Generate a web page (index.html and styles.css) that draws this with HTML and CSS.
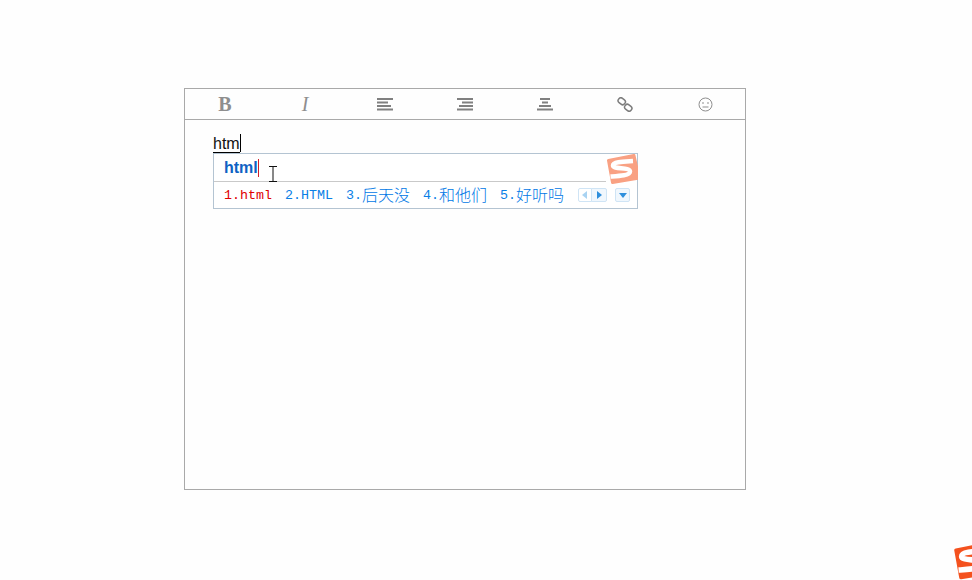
FILE: index.html
```html
<!DOCTYPE html>
<html lang="zh">
<head>
<meta charset="utf-8">
<title>Editor</title>
<link rel="stylesheet" href="styles.css">
</head>
<body>
<div class="editor">
  <div class="toolbar">
    <span class="tool"><span class="glyph bold">B</span></span>
    <span class="tool"><span class="glyph italic">I</span></span>
    <span class="tool"><svg width="16" height="13" viewBox="0 0 16 13"><path class="bars" d="M0 1h16M0 4.500h11M0 8h14M0 11.500h16"/></svg></span>
    <span class="tool"><svg width="16" height="13" viewBox="0 0 16 13"><path class="bars" d="M0 1h16M5 4.500h11M2 8h14M0 11.500h16"/></svg></span>
    <span class="tool"><svg width="16" height="13" viewBox="0 0 16 13"><path class="bars" d="M3 1h10M5 4.500h6M2 8h12M0 11.500h16"/></svg></span>
    <span class="tool"><svg width="16" height="15" viewBox="0 0 16 15"><g class="link"><rect x="1" y="1.500" width="7.500" height="5.500" rx="2.500" transform="rotate(38 4.750 4.250)"/><rect x="7.500" y="8" width="7.500" height="5.500" rx="2.500" transform="rotate(38 11.250 10.750)"/></g></svg></span>
    <span class="tool"><svg width="15" height="15" viewBox="0 0 15 15"><g class="smile"><circle cx="7.500" cy="7.500" r="6.500"/><path d="M5 5v2M10 5v2M4.500 10h6"/></g></svg></span>
  </div>
  <div class="content">
    <div class="typed"><span class="composing">htm</span><span class="caret"></span></div>
    <div class="ime">
      <div class="ime-input"><span class="ime-text">html</span><span class="ime-caret"></span></div>
      <div class="ime-row">
        <span class="cand first">1.html</span>
        <span class="cand">2.HTML</span>
        <span class="cand">3.<span class="cjk">后天没</span></span>
        <span class="cand">4.<span class="cjk">和他们</span></span>
        <span class="cand">5.<span class="cjk">好听吗</span></span>
        <span class="pager">
          <span class="pg prev"><svg width="6" height="8" viewBox="0 0 6 8"><path d="M5 0v8L0 4z" fill="#a9d3f2"/></svg></span><span class="pg next"><svg width="6" height="8" viewBox="0 0 6 8"><path d="M1 0v8l5-4z" fill="#2f8fdc"/></svg></span>
        </span>
        <span class="pg more"><svg width="8" height="5" viewBox="0 0 8 5"><path d="M0 0h8L4 5z" fill="#2f8fdc"/></svg></span>
      </div>
      <svg class="logo ime-logo" width="32" height="31" viewBox="0 0 32 31"><path d="M2.500 6.500L28 1.500L33 24L6.500 28.500z" fill="#f9a183" stroke="#f9a183" stroke-width="3" stroke-linejoin="round"/><path d="M27 7C19 7.500 7 7.500 7 11.500C7 15.500 24 13 24 17.500C24 21.500 12 22 4.500 22.500" fill="none" stroke="#fff" stroke-width="4.500"/></svg>
      <svg class="ibeam" width="8" height="16" viewBox="0 0 8 16"><path d="M0 .5h8M4 1v14M0 15.500h8" stroke="#111" fill="none"/></svg>
    </div>
  </div>
</div>
<svg class="logo corner-logo" width="42" height="40" viewBox="0 0 34 32"><path d="M2.500 6.500L28 1.500L33 24L6.500 28.500z" fill="#f4511e" stroke="#f4511e" stroke-width="3" stroke-linejoin="round"/><path d="M27 7C19 7.500 7 7.500 7 11.500C7 15.500 24 13 24 17.500C24 21.500 12 22 4.500 22.500" fill="none" stroke="#fff" stroke-width="4.500"/></svg>
</body>
</html>
```

FILE: styles.css
```css
html, body {
  margin: 0;
  height: 100%;
  background: #fefefe;
  overflow: hidden;
}
body {
  position: relative;
  padding: 88px 0 0 184px;
  box-sizing: border-box;
  font-family: "Liberation Sans", Arial, sans-serif;
}
.editor {
  width: 562px;
  height: 402px;
  box-sizing: border-box;
  border: 1px solid #a9a9a9;
}
.toolbar {
  display: grid;
  grid-template-columns: repeat(7, 80px);
  height: 30px;
  border-bottom: 1px solid #a9a9a9;
}
.tool {
  display: flex;
  align-items: center;
  justify-content: center;
}
.glyph {
  font-family: "Liberation Serif", serif;
  font-size: 20px;
  line-height: 20px;
  color: #8e8e8e;
}
.bold { font-weight: bold; }
.italic { font-style: italic; }
.bars {
  stroke: #808080;
  stroke-width: 2;
  fill: none;
}
.link rect {
  stroke: #7d7d7d;
  stroke-width: 1.500;
  fill: none;
}
.smile circle, .smile path {
  stroke: #8f8f8f;
  stroke-width: 1;
  fill: none;
}
.content {
  padding: 14px 0 0 28px;
}
.typed {
  height: 19px;
  display: flex;
  align-items: flex-start;
  font-size: 16px;
  line-height: 19px;
  color: #111;
}
.composing {
  height: 18px;
  border-bottom: 1px solid #000;
}
.caret {
  width: 1px;
  height: 18px;
  background: #000;
}
.ime {
  position: relative;
  width: 425px;
  height: 56px;
  box-sizing: border-box;
  border: 1px solid #b4c4d2;
  background: #fff;
}
.ime-input {
  height: 27px;
  margin-right: 31px;
  padding-left: 10px;
  border-bottom: 1px solid #c9c9c9;
  display: flex;
  align-items: center;
}
.ime-text {
  font-size: 16px;
  font-weight: bold;
  color: #0f62c4;
}
.ime-caret {
  width: 1px;
  height: 18px;
  background: #d0202a;
}
.ime-row {
  display: flex;
  align-items: center;
  height: 26px;
  padding-left: 10px;
  font-family: "Liberation Mono", monospace;
  font-size: 13.330px;
  color: #0a7fe6;
}
.cand {
  display: inline-flex;
  align-items: center;
  margin-right: 13px;
  white-space: nowrap;
}
.first { color: #e00000; }
.cjk {
  font-family: "Noto Sans CJK SC", sans-serif;
  font-size: 16px;
  line-height: 18px;
  font-weight: 300;
  margin-bottom: 3px;
  color: #0078e6;
}
.pager {
  display: flex;
  margin-left: 1px;
  margin-right: 8px;
}
.pg {
  width: 14px;
  height: 14px;
  box-sizing: border-box;
  border: 1px solid #cfe4f5;
  background: #f0f7fd;
  display: flex;
  align-items: center;
  justify-content: center;
}
.prev { background: #fff; border-radius: 2px 0 0 2px; }
.next { width: 16px; margin-left: -1px; border-radius: 0 2px 2px 0; }
.more { width: 15px; border-radius: 2px; }
.logo { position: absolute; }
.ime-logo { top: 0; right: -1px; }
.ibeam { position: absolute; left: 55px; top: 12px; }
.corner-logo { right: -23px; top: 542px; }
```
